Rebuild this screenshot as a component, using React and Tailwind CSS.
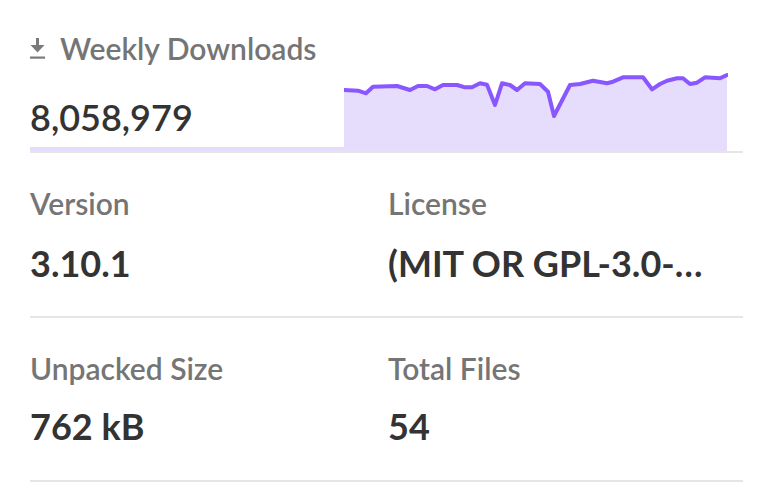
import React from 'react';

const FONT = { fontFamily: 'Lato, "Source Sans Pro", "Liberation Sans", sans-serif' };

// chart points in page coordinates (x from 344, baseline y = 151)
const POINTS = [
    [344, 90], [358, 90.7], [366, 93.3], [373, 86.7], [397, 86], [410, 90], [418, 86], [427, 86],
    [435, 89.3], [443, 85], [457, 85], [465, 87.3], [472, 87.3], [480, 83.3], [487, 84.7], [495, 105],
    [502, 83.3], [510, 85], [517, 90], [525, 83.3], [540, 84], [548, 91.7], [554, 116], [570, 85],
    [580, 84], [593, 80.7], [607, 83.3], [613, 81.7], [623, 77.3], [643, 77.3], [652, 89.3], [660, 84],
    [667, 80.7], [677, 78.3], [683, 78.3], [690, 84], [697, 82.7], [705, 77.3], [720, 78.3], [727, 75]
];

function Chart() {
    const pts = POINTS.map(([x, y]) => [x - 344, y - 66]);
    const line = pts.map(([x, y], i) => `${i ? 'L' : 'M'}${x} ${y}`).join(' ');
    const area = `${line} L${pts[pts.length - 1][0]} 85 L0 85 Z`;
    return (
        <svg width="384" height="85" viewBox="0 0 384 85" className="block">
            <path d={area} fill="#e5ddfb" />
            <path d={line} fill="none" stroke="#8956ff" strokeWidth="4" strokeLinejoin="round" strokeLinecap="round" />
        </svg>
    );
}

function DownloadIcon() {
    return (
        <svg width="15" height="21" viewBox="0 0 15 21" className="block">
            <rect x="6" y="0" width="3" height="9" fill="#7a7a7a" />
            <path d="M0.5 7 H14.5 L7.5 14.5 Z" fill="#7a7a7a" />
            <rect x="0" y="18.5" width="15" height="2.2" fill="#7a7a7a" />
        </svg>
    );
}

function Stat({ label, value, gap }) {
    return (
        <div className="min-w-0">
            <h3 className="text-[30px] leading-[36px] font-semibold text-[#757575]">{label}</h3>
            <p className={`text-[36px] leading-[44px] font-bold text-[#333333] truncate ${gap}`}>{value}</p>
        </div>
    );
}

export default function App() {
    return (
        <div className="w-[760px] h-[494px] bg-white pl-[30px] pr-[17px] overflow-hidden" style={FONT}>
            <div className="pt-[30px] border-b-2 border-[#e5e5e5]">
                <div className="flex items-center gap-[15px] h-[36px]">
                    <DownloadIcon />
                    <span className="text-[30px] leading-[36px] font-semibold text-[#757575]">Weekly Downloads</span>
                </div>
                <div className="flex items-end h-[85px]">
                    <div className="w-[314px]">
                        <p className="text-[36px] leading-[44px] font-semibold text-[#333333] mb-[8px]">8,058,979</p>
                        <div className="h-[4px] bg-[#e5ddfb]" />
                    </div>
                    <Chart />
                </div>
            </div>
            <div className="grid grid-cols-[358px_1fr] pt-[32px] pb-[31px] border-b-2 border-[#e5e5e5]">
                <Stat label="Version" value="3.10.1" gap="mt-[20px]" />
                <Stat label="License" value="(MIT OR GPL-3.0-or-later)" gap="mt-[20px] pr-[26px]" />
            </div>
            <div className="grid grid-cols-[358px_1fr] pt-[32px] pb-[32px] border-b-2 border-[#e5e5e5]">
                <Stat label="Unpacked Size" value="762 kB" gap="mt-[18px]" />
                <Stat label="Total Files" value="54" gap="mt-[18px]" />
            </div>
        </div>
    );
}
